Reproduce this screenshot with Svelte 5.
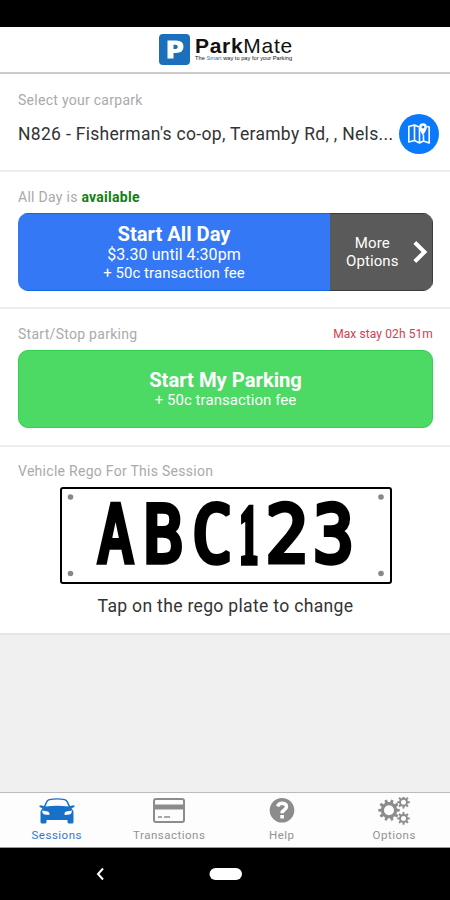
<script>
  const glyphs = [
    { c: 'A', x: 97, w: 37 },
    { c: 'B', x: 146, w: 36 },
    { c: 'C', x: 193, w: 37 },
    { c: '1', x: 239.5, w: 19 },
    { c: '2', x: 268, w: 37 },
    { c: '3', x: 315, w: 37 }
  ];
  // Left bearing and ink width of each plate glyph, in em
  const ink = {
    A: [0.027, 0.548], B: [0.081, 0.472], C: [0.053, 0.473],
    1: [0.065, 0.377], 2: [0.073, 0.445], 3: [0.065, 0.469]
  };
  const pen = 5;
  const sizeOf = (g) => (g.c === '1' ? 83 : 78);
  const place = (g) => {
    const [l, w] = ink[g.c];
    const size = sizeOf(g);
    const s = (g.w - pen) / (w * size);
    return `translate(${g.x - 60 + pen / 2 - l * size * s} 75.2) scale(${s} 1)`;
  };

  function gear(cx, cy, outer, root, hole, teeth) {
    let d = '';
    for (let i = 0; i < teeth; i++) {
      const a = (i * 2 * Math.PI) / teeth;
      const step = (2 * Math.PI) / teeth;
      for (const [r, o] of [[root, -0.29], [outer, -0.19], [outer, 0.19], [root, 0.29]]) {
        const t = a + o * step;
        d += `${d ? 'L' : 'M'}${(cx + r * Math.cos(t)).toFixed(2)} ${(cy + r * Math.sin(t)).toFixed(2)}`;
      }
    }
    return d + `ZM${cx - hole} ${cy}a${hole} ${hole} 0 1 0 ${2 * hole} 0a${hole} ${hole} 0 1 0 ${-2 * hole} 0Z`;
  }
</script>

<div class="app">
  <div class="status"></div>
  <header>
    <svg class="mark" width="31" height="31" viewBox="0 0 31 31">
      <rect width="31" height="31" rx="4" fill="#1c70bb" />
      <path fill="#fff" fill-rule="evenodd" d="M8.500 6.500h8.500q7.500 0 7.500 6.200t-7.500 6.300h-2.500v5.500h-6zM14.500 10.800v4.200h2q2.300 0 2.300-2.100t-2.300-2.100z" />
    </svg>
    <div class="brand">
      <div class="name"><b>Park</b>Mate</div>
      <div class="tag">The <span>Smart</span> way to pay for your Parking</div>
    </div>
  </header>

  <section class="carpark">
    <div class="label">Select your carpark</div>
    <div class="pick">
      <div class="place">N826 - Fisherman's co-op, Teramby Rd, , Nels...</div>
      <button class="map" aria-label="Map">
        <svg width="24" height="24" viewBox="0 0 24 24" fill="none" stroke="#fff" stroke-width="1.600" stroke-linejoin="round">
          <path d="M12 5 7.500 3 1.800 4.500v15.500L7.500 18.500l5 2.500 4-2 5.700 2V5l-2-.6M7.500 3v15.500M12.500 6v15M16.500 13v6" />
          <path fill="#fff" stroke="none" fill-rule="evenodd" d="M16 1.200a3.900 3.900 0 0 1 3.900 3.900c0 3-3.900 8.400-3.900 8.400s-3.900-5.400-3.900-8.400A3.900 3.900 0 0 1 16 1.200zm0 2.500a1.400 1.400 0 1 0 0 2.800 1.400 1.400 0 0 0 0-2.800z" />
        </svg>
      </button>
    </div>
  </section>

  <section class="allday">
    <div class="label">All Day is <b>available</b></div>
    <div class="split">
      <button class="main">
        <span class="title">Start All Day</span>
        <span class="sub price">$3.30 until 4:30pm</span>
        <span class="sub">+ 50c transaction fee</span>
      </button>
      <button class="more">
        <span>More<br />Options</span>
        <svg width="16" height="24" viewBox="0 0 16 24"><path d="M1.800 2.500 11.500 12l-9.700 9.500" fill="none" stroke="#fff" stroke-width="4" /></svg>
      </button>
    </div>
  </section>

  <section class="startstop">
    <div class="row"><div class="label">Start/Stop parking</div><div class="max">Max stay 02h 51m</div></div>
    <button class="green">
      <span class="title">Start My Parking</span>
      <span class="sub">+ 50c transaction fee</span>
    </button>
  </section>

  <section class="vehicle">
    <div class="label rego">Vehicle Rego For This Session</div>
    <svg class="plate" width="332" height="98" viewBox="0 0 332 98">
      <rect x="1" y="1" width="330" height="95" rx="2" fill="#fff" stroke="#000" stroke-width="2" />
      {#each [10.5, 321] as x}
        {#each [10, 86.5] as y}
          <circle cx={x} cy={y} r="2.800" fill="#888" />
        {/each}
      {/each}
      {#each glyphs as g}
        <text class="glyph" class:one={g.c === '1'} transform={place(g)} font-size={sizeOf(g)} stroke-width={pen}>{g.c}</text>
      {/each}
    </svg>
    <div class="hint">Tap on the rego plate to change</div>
  </section>

  <div class="space"></div>

  <nav>
    <div class="tab active">
      <svg width="38" height="28" viewBox="0 0 38 28" fill="#1870c9">
        <path fill-rule="evenodd" d="M11 2Q19 .4 27 2q2 .5 3.200 3l1.800 4 3.500-.7q1.500.2 1 1.600l-3 1.300q2 2 2 5V25q0 1.500-1.500 1.500h-3Q29.500 26.500 29.500 25v-2h-21v2q0 1.500-1.500 1.500H4Q2.500 26.500 2.500 25v-8.800q0-3 2-5l-3-1.300Q1 8.500 2.500 8.300L6 9l1.800-4Q9 2.500 11 2zM11.500 3.300Q10 3.800 9.200 5.500L7.500 9.500q11.500-1.500 23 0l-1.700-4q-.8-1.700-2.300-2.200Q19 1.800 11.500 3.300zM4.300 13.500q-.5 3 2 3.900l5 .6q.8-2.700-1.700-3.500zM33.700 13.500l-5.300 1q-2.500.8-1.700 3.500l5-.6q2.500-.9 2-3.900z" />
      </svg>
      <span>Sessions</span>
    </div>
    <div class="tab">
      <svg width="32" height="28" viewBox="0 0 32 28" fill="none" stroke="#8c8c8c">
        <rect x="1" y="2" width="30" height="23" rx="2" stroke-width="2" />
        <path d="M1 10h30" stroke-width="5" /><path d="M5 20h4M11 20h6" stroke-width="1.500" />
      </svg>
      <span>Transactions</span>
    </div>
    <div class="tab">
      <svg width="26" height="28" viewBox="0 0 26 28">
        <circle cx="13" cy="13.200" r="12.300" fill="#8c8c8c" />
        <path d="M8.700 9.500q.8-3.300 4.500-3.300 4.300.2 4.300 3.600 0 1.800-2.300 3.200-2.200 1.400-2.200 3.200" fill="none" stroke="#fff" stroke-width="3.400" />
        <rect x="11.300" y="18" width="3.600" height="3.500" fill="#fff" />
      </svg>
      <span>Help</span>
    </div>
    <div class="tab">
      <svg width="34" height="28" viewBox="0 0 34 28" fill="#8c8c8c" fill-rule="evenodd">
        <path d={gear(12, 13.2, 10.8, 8.2, 5, 10)} />
        <path d={gear(26.5, 5.2, 6.4, 4.5, 2.5, 8)} />
        <path d={gear(26.5, 21.4, 6.4, 4.5, 2.5, 8)} />
      </svg>
      <span>Options</span>
    </div>
  </nav>
  <footer>
    <svg width="450" height="52" viewBox="0 0 450 52">
      <path d="m103 20.500-5 5.500 5 5.500" fill="none" stroke="#fff" stroke-width="2" />
      <rect x="209.500" y="20" width="32.500" height="12" rx="6" fill="#fff" />
    </svg>
  </footer>
</div>

<style>
  .app { width: 450px; height: 900px; display: flex; flex-direction: column; background: #fff; font-family: Roboto, sans-serif; overflow: hidden; }
  .app * { box-sizing: border-box; }
  .status { height: 27px; background: #000; flex: none; }
  header { height: 47px; flex: none; border-bottom: 2px solid #ccc; display: flex; padding: 7px 0 0 159px; gap: 5px; }
  .mark { flex: none; }
  .brand { font-family: "Liberation Sans", sans-serif; color: #111; padding-top: 3px; white-space: nowrap; }
  .name { font-size: 21px; line-height: 18px; letter-spacing: .7px; }
  .tag { font-size: 5.700px; line-height: 6px; }
  .tag span { color: #1c70bb; }
  section { flex: none; border-bottom: 2px solid #ededed; padding: 0 17px 0 18px; }
  .carpark { height: 98px; padding-top: 17px; padding-right: 11px; }
  .allday { height: 137px; padding-top: 16px; }
  .startstop { height: 138px; padding-top: 16px; }
  .vehicle { height: 186px; padding-top: 15px; border: 0; }
  .label { font-size: 14px; line-height: 18px; color: #aaa; white-space: nowrap; letter-spacing: .28px; }
  .label b { color: #118011; }
  .pick { display: flex; justify-content: space-between; align-items: center; height: 40px; margin-top: 5px; }
  .place { font-size: 17.500px; color: #333; white-space: nowrap; letter-spacing: .31px; }
  button { border: 0; font-family: inherit; color: #fff; padding: 0; }
  .map { width: 40px; height: 40px; border-radius: 50%; background: #0a7afa; display: flex; align-items: center; justify-content: center; flex: none; }
  .split { display: flex; height: 78px; margin-top: 7px; border-radius: 10px; overflow: hidden; }
  .main { width: 312px; background: #3478f6; display: flex; flex-direction: column; align-items: center; padding-top: 9px; border-top: 1px solid #1266df; border-bottom: 1px solid #1266df; }
  .more { flex: 1; background: #5a5a5a; border: 1px solid #3c3c3c; border-left: 0; display: flex; align-items: center; font-size: 15px; line-height: 18px; padding-left: 16px; gap: 14px; letter-spacing: .1px; }
  .title { font-size: 20.200px; line-height: 22px; font-weight: 700; white-space: nowrap; }
  .sub { font-size: 15px; line-height: 18px; white-space: nowrap; letter-spacing: .05px; }
  .main .title { margin-bottom: 1px; }
  .price { font-size: 16px; }
  .row { display: flex; justify-content: space-between; }
  .max { font-size: 12px; line-height: 18px; color: #d43c50; letter-spacing: .1px; }
  .green { width: 415px; height: 78px; margin-top: 7px; border-radius: 10px; border: 1px solid #2fd252; background: #4cd964; display: flex; flex-direction: column; align-items: center; padding-top: 18px; }
  .plate { display: block; margin: 7px 0 0 42px; }
  .glyph { font-family: "DejaVu Sans Mono", monospace; fill: #000; stroke: #000; stroke-linejoin: miter; stroke-miterlimit: 2; vector-effect: non-scaling-stroke; }
  .one { font-family: "Liberation Serif", serif; font-weight: 700; }
  .hint { text-align: center; font-size: 17.600px; line-height: 22px; margin-top: 10px; color: #333; letter-spacing: .3px; }
  .space { flex: 1; background: #f0f0f0; border-top: 2px solid #e5e5e5; }
  nav { height: 56px; flex: none; display: flex; background: #fdfdfd; border-top: 1px solid #bbb; border-bottom: 1px solid #999; }
  .tab { flex: 1; display: flex; flex-direction: column; align-items: center; padding: 4px 0 0 1px; font-size: 11.500px; line-height: 15px; color: #929292; letter-spacing: .5px; }
  .tab span { margin-top: 3px; }
  .active { color: #3277cf; }
  footer { height: 52px; flex: none; background: #000; }
</style>
